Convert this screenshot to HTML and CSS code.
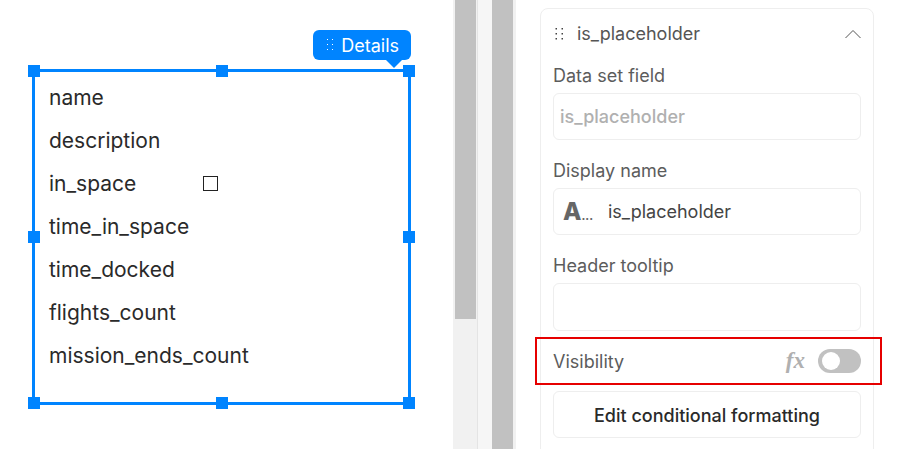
FILE: index.html
```html
<!DOCTYPE html>
<html lang="en">
<head>
    <meta charset="UTF-8">
    <title>Table details</title>
    <link rel="stylesheet" href="styles.css">
</head>
<body>
    <div class="app">
        <section class="canvas">
            <div class="widget">
                <div class="widget-tag">
                    <svg class="grip" width="8" height="12" viewBox="0 0 8 12"><g fill="#fff"><rect x="1" y="0" width="1" height="1"/><rect x="6" y="0" width="1" height="1"/><rect x="1" y="5" width="1" height="1"/><rect x="6" y="5" width="1" height="1"/><rect x="1" y="10" width="1" height="1"/><rect x="6" y="10" width="1" height="1"/></g></svg>
                    <span>Details</span>
                </div>
                <span class="handle h-tl"></span>
                <span class="handle h-tc"></span>
                <span class="handle h-tr"></span>
                <span class="handle h-ml"></span>
                <span class="handle h-mr"></span>
                <span class="handle h-bl"></span>
                <span class="handle h-bc"></span>
                <span class="handle h-br"></span>
                <ul class="field-list">
                    <li>name</li>
                    <li>description</li>
                    <li>in_space<span class="check"></span></li>
                    <li>time_in_space</li>
                    <li>time_docked</li>
                    <li>flights_count</li>
                    <li>mission_ends_count</li>
                </ul>
            </div>
        </section>

        <div class="gutter">
            <div class="track track-first"><div class="thumb thumb-short"></div></div>
            <div class="track track-second"><div class="thumb thumb-full"></div></div>
        </div>

        <aside class="panel">
            <div class="card">
                <div class="card-head">
                    <svg class="card-grip" width="9" height="14" viewBox="0 0 9 14"><g fill="#444"><rect x="0.5" y="1" width="1.5" height="1.5"/><rect x="6.5" y="1" width="1.5" height="1.5"/><rect x="0.5" y="6" width="1.5" height="1.5"/><rect x="6.5" y="6" width="1.5" height="1.5"/><rect x="0.5" y="11" width="1.5" height="1.5"/><rect x="6.5" y="11" width="1.5" height="1.5"/></g></svg>
                    <span class="card-title">is_placeholder</span>
                    <svg class="chevron" width="16" height="10" viewBox="0 0 16 10"><path d="M0.5 9 L8 1.5 L15.5 9" fill="none" stroke="#555" stroke-width="1"/></svg>
                </div>

                <label class="label label-first">Data set field</label>
                <div class="input input-disabled">is_placeholder</div>

                <label class="label">Display name</label>
                <div class="input">
                    <span class="type-icon">A<small>...</small></span>
                    <span>is_placeholder</span>
                </div>

                <label class="label">Header tooltip</label>
                <div class="input input-tall"></div>

                <div class="visibility">
                    <span class="label-inline">Visibility</span>
                    <span class="fx">fx</span>
                    <span class="toggle"><span class="knob"></span></span>
                </div>

                <button class="format-btn">Edit conditional formatting</button>
            </div>
        </aside>
    </div>
</body>
</html>
```

FILE: styles.css
```css
html, body {
    margin: 0;
    height: 100%;
    overflow: hidden;
}

body {
    font-family: Inter, "Liberation Sans", sans-serif;
    background-color: #fff;
}

.app {
    display: flex;
    height: 449px;
}

.canvas {
    position: relative;
    width: 453px;
    flex: none;
}

/* selected widget */
.widget {
    position: absolute;
    left: 32px;
    top: 69px;
    width: 373px;
    height: 330px;
    border: 3px solid #0084ff;
}

.widget-tag {
    position: absolute;
    right: -3px;
    top: -42px;
    display: flex;
    align-items: center;
    gap: 7px;
    height: 30px;
    padding: 0 12px 0 13px;
    background-color: #0084ff;
    color: #fff;
    font-size: 18px;
    border-radius: 6px;
}

.widget-tag::after {
    content: "";
    position: absolute;
    right: 9px;
    bottom: -8px;
    border-left: 8px solid transparent;
    border-right: 8px solid transparent;
    border-top: 8px solid #0084ff;
}

.handle {
    position: absolute;
    width: 12px;
    height: 12px;
    background-color: #0084ff;
}

.h-tl { left: -7px; top: -7px; }
.h-tc { left: 181px; top: -7px; }
.h-tr { right: -7px; top: -7px; }
.h-ml { left: -7px; top: 159px; }
.h-mr { right: -7px; top: 159px; }
.h-bl { left: -7px; bottom: -7px; }
.h-bc { left: 181px; bottom: -7px; }
.h-br { right: -7px; bottom: -7px; }

.field-list {
    list-style: none;
    margin: 0;
    padding: 4px 0 0 14px;
    font-size: 21px;
    line-height: 25px;
    color: #2a2a2a;
}

.field-list li {
    display: flex;
    align-items: center;
    height: 43px;
}

.check {
    box-sizing: border-box;
    width: 15px;
    height: 15px;
    margin-left: 67px;
    border: 1px solid #222;
}

/* scroll gutters */
.gutter {
    display: flex;
    flex: none;
    width: 63px;
    background-color: #f1f1f1;
}

.track {
    padding-left: 2px;
    height: 100%;
}

.track-first {
    width: 25px;
    box-sizing: border-box;
    border-right: 1px solid #e4e4e4;
}

.track-second {
    flex: 1;
    padding-left: 14px;
    background-color: #f6f6f6;
    box-sizing: border-box;
    border-right: 3px solid #f1f1f1;
}

.thumb {
    width: 21px;
    background-color: #c1c1c1;
}

.thumb-short {
    height: 319px;
}

.thumb-full {
    height: 100%;
}

/* right panel */
.panel {
    flex: 1;
    padding: 8px 25px 0 24px;
}

.card {
    box-sizing: border-box;
    height: 460px;
    padding: 0 12px;
    border: 1px solid #eeeeee;
    border-radius: 8px;
}

.card-head {
    display: flex;
    align-items: center;
    height: 49px;
    color: #555;
    font-size: 18px;
}

.card-grip {
    margin: 0 13px 0 2px;
}

.card-title {
    flex: 1;
}

.label {
    display: block;
    margin: 20px 0 6px;
    font-size: 18px;
    line-height: 22px;
    color: #5c5c5c;
}

.label-first {
    margin-top: 7px;
}

.input {
    box-sizing: border-box;
    display: flex;
    align-items: center;
    height: 47px;
    padding: 0 6px;
    font-size: 18px;
    color: #444;
    border: 1px solid #eeeeee;
    border-radius: 6px;
}

.input-disabled {
    color: #b0b0b0;
    font-weight: 500;
}

.input-tall {
    height: 48px;
}

.type-icon {
    width: 48px;
    padding-left: 3px;
    box-sizing: border-box;
    font-size: 24px;
    font-weight: 800;
    color: #666;
}

.type-icon small {
    font-size: 11px;
}

.visibility {
    position: relative;
    display: flex;
    align-items: center;
    height: 44px;
    margin-top: 8px;
}

/* red highlight drawn over the row */
.visibility::before {
    content: "";
    position: absolute;
    left: -18px;
    right: -21px;
    top: -2px;
    bottom: -2px;
    border: 2px solid #e60000;
}

.label-inline {
    flex: 1;
    font-size: 18px;
    color: #5c5c5c;
}

.fx {
    margin-right: 13px;
    font-family: "Liberation Serif", serif;
    font-style: italic;
    font-weight: 700;
    font-size: 23px;
    color: #b0b0b0;
}

.toggle {
    display: flex;
    align-items: center;
    width: 43px;
    height: 24px;
    padding-left: 4px;
    box-sizing: border-box;
    background-color: #c1c1c1;
    border-radius: 12px;
}

.knob {
    width: 18px;
    height: 18px;
    background-color: #fff;
    border-radius: 50%;
}

.format-btn {
    display: block;
    box-sizing: border-box;
    width: 100%;
    height: 47px;
    margin-top: 8px;
    padding-top: 3px;
    font-family: inherit;
    font-size: 18px;
    font-weight: 500;
    color: #2a2a2a;
    background-color: #fff;
    border: 1px solid #eeeeee;
    border-radius: 6px;
}
```
